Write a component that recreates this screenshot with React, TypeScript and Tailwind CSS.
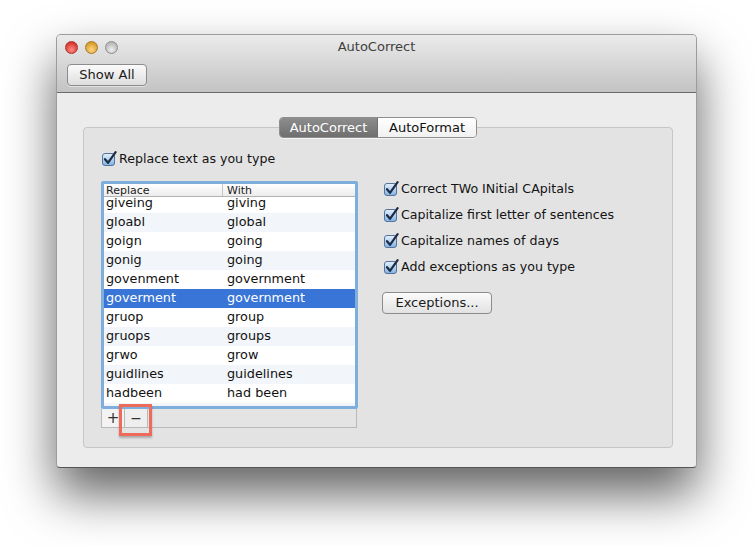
import React from "react";

const rows: [string, string][] = [
  ["giveing", "giving"],
  ["gloabl", "global"],
  ["goign", "going"],
  ["gonig", "going"],
  ["govenment", "government"],
  ["goverment", "government"],
  ["gruop", "group"],
  ["gruops", "groups"],
  ["grwo", "grow"],
  ["guidlines", "guidelines"],
  ["hadbeen", "had been"],
  ["i", "i"],
];

const SELECTED = 5;

function Check() {
  return (
    <svg width="16" height="16" viewBox="0 0 16 16" className="shrink-0">
      <defs>
        <linearGradient id="cbg" x1="0" y1="0" x2="0" y2="1">
          <stop offset="0" stopColor="#e6f1fb" />
          <stop offset="0.5" stopColor="#b4d3f1" />
          <stop offset="1" stopColor="#7fb1e3" />
        </linearGradient>
      </defs>
      <rect x="1.5" y="2.5" width="12" height="12" rx="2.5" fill="url(#cbg)" stroke="#56729a" strokeWidth="1" />
      <path d="M4 8.2 L7 11.8 L14.6 1.2" fill="none" stroke="#1d2c44" strokeWidth="2.2" strokeLinecap="round" strokeLinejoin="round" />
    </svg>
  );
}

function CheckRow({ label }: { label: string }) {
  return (
    <div className="flex items-center gap-[2px] h-[16px] text-[12.6px] text-[#141414] leading-none">
      <Check />
      <span>{label}</span>
    </div>
  );
}

function TrafficLight({ from, to, border }: { from: string; to: string; border: string }) {
  return (
    <div
      className="h-[13px] w-[13px] rounded-full border"
      style={{ background: `radial-gradient(circle at 50% 70%, ${to} 0%, ${from} 75%)`, borderColor: border }}
    />
  );
}

export default function App() {
  return (
    <div className="relative w-[754px] h-[547px] bg-white pt-[34px] pl-[56px] font-['DejaVu_Sans',sans-serif] overflow-hidden">
      <div className="w-[641px] h-[434px] flex flex-col rounded-t-[5px] rounded-b-[4px] bg-[#ececec] border border-[#9c9c9c] border-b-[#555] shadow-[0_26px_50px_rgba(0,0,0,0.62)] overflow-hidden">
        {/* Title bar + toolbar */}
        <div className="h-[58px] shrink-0 bg-gradient-to-b from-[#ebebeb] to-[#c3c3c3] border-b border-[#6a6a6a] flex flex-col">
          <div className="relative h-[24px] flex items-center pl-[8px]">
            <div className="flex gap-[7px] pt-[1px]">
              <TrafficLight from="#d5342c" to="#ff8c84" border="#a8322c" />
              <TrafficLight from="#d79a2b" to="#ffd581" border="#a5782a" />
              <TrafficLight from="#b5b5b5" to="#eeeeee" border="#8e8e8e" />
            </div>
            <div className="absolute inset-0 flex items-center justify-center text-[13px] text-[#404040]">AutoCorrect</div>
          </div>
          <div className="pl-[10px] pt-[3px]">
            <button className="h-[22px] w-[80px] rounded-[4px] border border-[#8c8c8c] bg-gradient-to-b from-[#fbfbfb] to-[#dedede] text-[13px] text-[#1a1a1a] shadow-[0_1px_0_rgba(255,255,255,0.5)]">
              Show All
            </button>
          </div>
        </div>

        {/* Content */}
        <div className="flex flex-col pl-[26px] pr-[23px] pt-[24px]">
          <div className="relative z-10 flex justify-center">
            <div className="flex h-[21px] rounded-[4px] border border-[#8e8e8e] overflow-hidden text-[13px] shadow-[0_1px_0_rgba(255,255,255,0.6)]">
              <div className="w-[98px] flex items-center justify-center bg-gradient-to-b from-[#8d8d8d] to-[#6f6f6f] text-white border-r border-[#707070]">
                AutoCorrect
              </div>
              <div className="w-[98px] flex items-center justify-center bg-gradient-to-b from-[#ffffff] to-[#f1f1f1] text-[#111]">
                AutoFormat
              </div>
            </div>
          </div>

          <div className="mt-[-11px] h-[321px] rounded-[4px] border border-[#c6c6c6] bg-[#e3e3e3] pl-[17px] pt-[23px] flex gap-[25px]">
            {/* Left column */}
            <div className="flex flex-col w-[257px]">
              <CheckRow label="Replace text as you type" />
              <div className="relative mt-[14px]">
                <div className="h-[228px] rounded-[2px] border-[3px] border-[#7eaedb] bg-white flex flex-col overflow-hidden">
                  <div className="h-[13px] shrink-0 flex items-stretch bg-gradient-to-b from-white to-[#ececec] border-b border-[#b3b3b3] text-[11px] leading-none text-[#222] relative z-10">
                    <div className="w-[119px] pl-[2px] flex items-center border-r border-[#c6c6c6]">Replace</div>
                    <div className="pl-[4px] flex items-center">With</div>
                  </div>
                  <div className="flex-1 overflow-hidden">
                    <div className="mt-[-3px]">
                      {rows.map(([a, b], i) => (
                        <div
                          key={i}
                          className={`h-[19px] flex items-center text-[12.8px] leading-none ${
                            i === SELECTED
                              ? "bg-[#3875d7] text-white"
                              : i % 2 === 1
                                ? "bg-[#f2f5fa] text-[#111]"
                                : "bg-white text-[#111]"
                          }`}
                        >
                          <span className="w-[123px] pl-[2px]">{a}</span>
                          <span>{b}</span>
                        </div>
                      ))}
                    </div>
                  </div>
                </div>
                {/* +/- bar */}
                <div className="h-[19px] w-[256px] flex border border-t-0 border-[#b9b9b9] bg-[#e4e4e4]">
                  <div className="w-[23px] flex items-center justify-center border-r border-[#b9b9b9] bg-[#f3f3f3] text-[15px] leading-none text-[#333]">+</div>
                  <div className="w-[23px] flex items-center justify-center border-r border-[#b9b9b9] bg-[#eeeeee] text-[14px] leading-none text-[#333]">−</div>
                </div>
                {/* Annotation highlight */}
                <div className="absolute left-[18px] top-[223px] h-[32px] w-[33px] border-[3px] border-[#ee6a5b] shadow-[0_2px_2px_rgba(0,0,0,0.25)]" />
              </div>
            </div>

            {/* Right column */}
            <div className="flex flex-col pt-[30px]">
              <div className="flex flex-col gap-[10px]">
                <CheckRow label="Correct TWo INitial CApitals" />
                <CheckRow label="Capitalize first letter of sentences" />
                <CheckRow label="Capitalize names of days" />
                <CheckRow label="Add exceptions as you type" />
              </div>
              <button className="mt-[17px] ml-[-1px] h-[22px] w-[110px] rounded-[4px] border border-[#8c8c8c] bg-gradient-to-b from-[#fbfbfb] to-[#e2e2e2] text-[13px] text-[#1a1a1a]">
                Exceptions...
              </button>
            </div>
          </div>
        </div>
      </div>
    </div>
  );
}
